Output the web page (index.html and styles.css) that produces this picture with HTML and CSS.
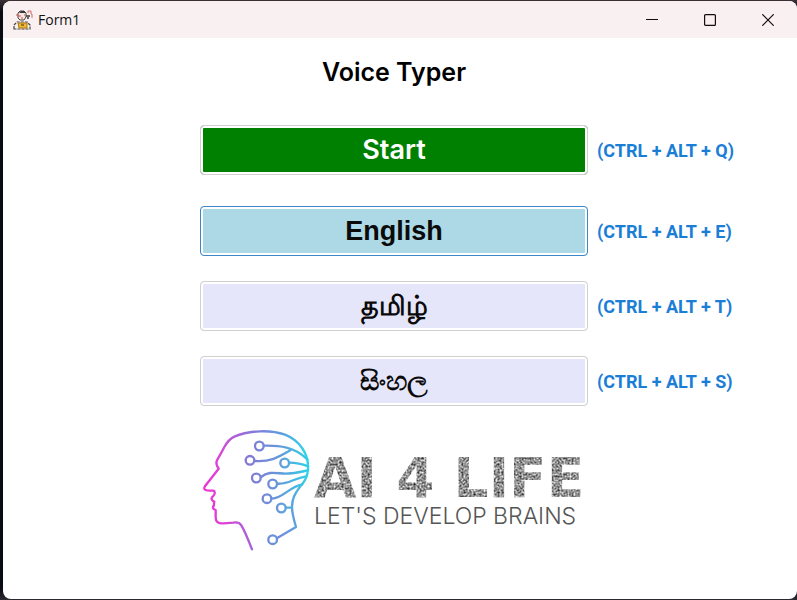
FILE: index.html
```html
<!DOCTYPE html>
<html lang="en">
<head>
<meta charset="utf-8">
<title>Form1</title>
<link rel="stylesheet" href="styles.css">
</head>
<body>
<div class="window">
  <header class="titlebar">
    <svg class="app-icon" viewBox="0 0 20 20" aria-hidden="true">
      <path d="M5 7V3l2-2h4l2 2v4l-2 3H7L5 8z" fill="#f8e6df" stroke="#4a4242"/>
      <path d="M6 3l2-2h3l2 2z" fill="#3a3434"/>
      <path d="M3 5h2M5 6h3M11 5h1M8 8h2" stroke="#d0504c" stroke-width="1.2"/>
      <path d="M13 6h4M14 8h2" stroke="#3a3434" stroke-width="1.5"/>
      <path d="M15 3V1h3v3h1v4" fill="none" stroke="#d36a68"/>
      <path d="M1 19v-4l3-3h10l3 3v4z" fill="#f8f2ee" stroke="#4a4242" stroke-width="1.2" stroke-dasharray="3 1"/>
      <path d="M5 13h9v5H6z" fill="#f3b62f" stroke="#a87a20"/>
      <path d="M8 15h3" stroke="#3a3434"/>
    </svg>
    <span class="caption">Form1</span>
    <button class="control" aria-label="Minimize"><svg viewBox="0 0 12 12"><path d="M0 5.5h12"/></svg></button>
    <button class="control" aria-label="Maximize"><svg viewBox="0 0 12 12"><rect x=".6" y=".6" width="10.8" height="10.8" rx="1"/></svg></button>
    <button class="control" aria-label="Close"><svg viewBox="0 0 12 12"><path d="M.3.3l11.4 11.4M11.7.3L.3 11.7"/></svg></button>
  </header>
  <main class="form">
    <h1 class="title">Voice Typer</h1>
    <div class="row row-start">
      <button class="action start" id="start">Start</button>
      <label class="shortcut" for="start">(CTRL + ALT + Q)</label>
    </div>
    <div class="row">
      <button class="action english" id="english">English</button>
      <label class="shortcut" for="english">(CTRL + ALT + E)</label>
    </div>
    <div class="row">
      <button class="action" id="tamil" lang="ta">தமிழ்</button>
      <label class="shortcut" for="tamil">(CTRL + ALT + T)</label>
    </div>
    <div class="row">
      <button class="action" id="sinhala" lang="si">සිංහල</button>
      <label class="shortcut" for="sinhala">(CTRL + ALT + S)</label>
    </div>
    <div class="row row-logo">
      <div class="logo">
        <svg class="head" viewBox="30 24 330 372" aria-hidden="true">
          <defs>
            <linearGradient id="outline" gradientUnits="userSpaceOnUse" x1="40" y1="200" x2="355" y2="160">
              <stop offset="0" stop-color="#ee32d4"/>
              <stop offset=".18" stop-color="#d944d8"/>
              <stop offset=".5" stop-color="#8b74d8"/>
              <stop offset=".8" stop-color="#5f9ee0"/>
              <stop offset="1" stop-color="#30d3e8"/>
            </linearGradient>
            <linearGradient id="circuit" gradientUnits="userSpaceOnUse" x1="170" y1="0" x2="355" y2="0">
              <stop offset="0" stop-color="#8577d6"/>
              <stop offset=".5" stop-color="#6795da"/>
              <stop offset="1" stop-color="#2fd0e8"/>
            </linearGradient>
            <filter id="grain" x="0" y="0" width="100%" height="100%" color-interpolation-filters="sRGB">
              <feTurbulence type="fractalNoise" baseFrequency=".5" numOctaves="2" seed="8"/>
              <feColorMatrix values="1.3 0 0 0 -.08  1.3 0 0 0 -.08  1.3 0 0 0 -.08  0 0 0 0 1"/>
              <feComposite in2="SourceGraphic" operator="in"/>
            </filter>
          </defs>
          <path class="trace" stroke="url(#outline)" d="M186 388C176 362 166 336 154 316C148 307 141 306 130 308L100 310C84 311 77 305 77 291V270C70 268 66 262 72 256C71 250 73 248 73 245C65 242 62 235 68 230C76 224 76 213 70 212C63 211 55 213 47 210C41 208 42 202 46 197L86 146C79 137 77 128 82 119C92 102 98 91 103 81C112 65 120 56 133 50C177 31 241 28 285 44C331 62 357 104 354 148C352 176 341 187 328 203C313 224 307 236 306 259C306 283 313 303 318 321L263 353"/>
          <g class="trace" stroke="url(#circuit)">
            <path d="M222 77C267 76 314 80 352 118M195 123C239 126 264 113 301 91M298 128C321 128 339 133 354 139M213 171C236 152 258 160 287 161C318 161 338 154 354 151M262 191C294 194 310 175 349 169M245 236C282 234 296 201 337 193M288 263H305"/>
            <circle cx="208" cy="78" r="13"/><circle cx="180" cy="121" r="13"/>
            <circle cx="284" cy="129" r="13"/><circle cx="199" cy="174" r="13"/>
            <circle cx="248" cy="192" r="13"/><circle cx="231" cy="236" r="13"/>
            <circle cx="274" cy="264" r="13"/><circle cx="248" cy="359" r="13"/>
          </g>
        </svg>
        <div class="wordmark">
          <strong class="brand">AI 4 LIFE</strong>
          <span class="tagline">LET'S DEVELOP BRAINS</span>
        </div>
      </div>
    </div>
  </main>
</div>
</body>
</html>
```
FILE: styles.css
```css
* {
  box-sizing: border-box;
}

body {
  margin: 0;
  min-height: 100vh;
  padding: 1px 0 1px 3px;
  display: flex;
  background: linear-gradient(to bottom, #3b3035, #080b14 12px, #080b14 calc(100% - 12px), #2c2a30);
  font-family: "Liberation Sans", sans-serif;
}

.window {
  flex: 1;
  min-width: 0;
  display: flex;
  flex-direction: column;
  border-radius: 8px;
  overflow: hidden;
  background: #fff;
}

.titlebar {
  display: flex;
  align-items: center;
  height: 37px;
  padding-left: 10px;
  background: #f9f0f1;
}

.app-icon {
  width: 20px;
  height: 20px;
}

.caption {
  flex: 1;
  padding-left: 5px;
  font: 14px/18px "Open Sans", "Noto Sans", sans-serif;
  color: #111;
}

.control {
  width: 58px;
  height: 37px;
  padding: 0;
  border: 0;
  background: none;
  display: grid;
  place-items: center;
}

.control svg {
  width: 12px;
  height: 12px;
  fill: none;
  stroke: #150b10;
  stroke-width: 1.2;
}

.form {
  display: flex;
  flex-direction: column;
  gap: 25px;
  padding-top: 18px;
}

.row {
  display: grid;
  grid-template-columns: 197fr 388fr 209fr;
  align-items: center;
}

.row > :first-child {
  grid-column: 2;
}

.title {
  margin: 0 12px 12px 0;
  text-align: center;
  font: 600 25px/32px Inter, sans-serif;
  color: #000;
}

.row-start {
  margin-bottom: 6px;
}

.row-logo {
  margin-top: -3px;
}

.action {
  height: 50px;
  padding: 0;
  border: 1px solid #d0d0d0;
  border-radius: 4px;
  background: #e6e6fa;
  box-shadow: inset 0 0 0 2px #fff;
  font: 700 27px "Liberation Sans", sans-serif;
  color: #0a0a0a;
}

.action:lang(ta),
.action:lang(si) {
  line-height: 32px;
}

.start {
  background: #008000;
  font: 600 27px/32px Inter, sans-serif;
  color: #fff;
}

.english {
  border-color: #3b87c8;
  background: #add8e6;
}

.shortcut {
  padding-left: 9px;
  font: 700 18px Roboto, sans-serif;
  white-space: nowrap;
  color: #1b7ed6;
}

.logo {
  display: flex;
  gap: 4px;
}

.head {
  flex: none;
  width: 110px;
  height: 124px;
}

.trace {
  fill: none;
  stroke-width: 7;
  stroke-linecap: round;
  stroke-linejoin: round;
}

.wordmark {
  display: flex;
  flex-direction: column;
  padding-top: 18px;
  white-space: nowrap;
}

.brand {
  font: 700 55px/64px "DejaVu Sans", sans-serif;
  filter: url(#grain);
}

.tagline {
  font: 300 23px/12px Inter, sans-serif;
  color: #555;
}
```
